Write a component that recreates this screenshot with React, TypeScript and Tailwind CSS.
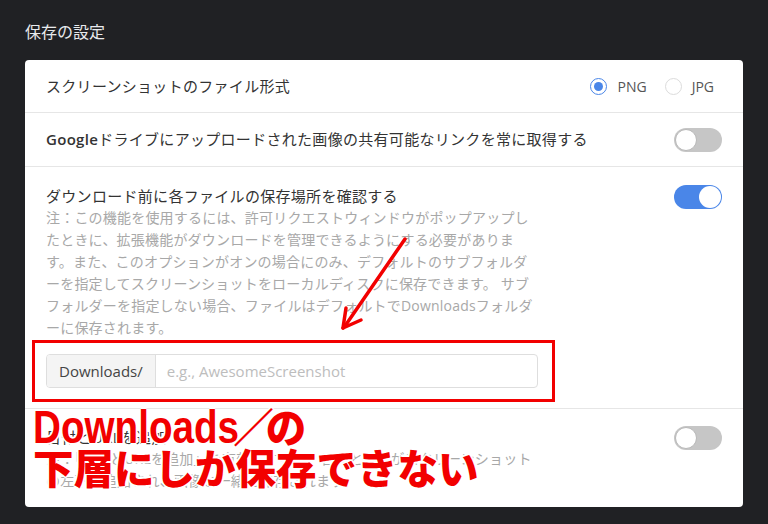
import type { ReactNode } from 'react'

const jp = "font-['Open_Sans','Noto_Sans_CJK_JP',sans-serif]"

function Toggle({ on }: { on?: boolean }) {
  return (
    <div
      className={`relative h-[24px] w-[48px] shrink-0 rounded-full ${on ? 'bg-[#4a86e8]' : 'bg-[#c6c6c6]'}`}
    >
      <div
        className={`absolute top-[1px] h-[22px] w-[22px] rounded-full bg-white ${
          on ? 'right-[1px]' : 'left-[1px] border border-[#b8b8b8]'
        }`}
      />
    </div>
  )
}

function Radio({ checked, label }: { checked?: boolean; label: string }) {
  return (
    <label className="flex items-center gap-[10px]">
      <span
        className={`flex h-[17px] w-[17px] items-center justify-center rounded-full border ${
          checked ? 'border-[#4a86e8]' : 'border-[#dcdcdc]'
        }`}
      >
        {checked && <span className="h-[9px] w-[9px] rounded-full bg-[#4a86e8]" />}
      </span>
      <span className="text-[14px] text-[#555]">{label}</span>
    </label>
  )
}

function Row({ children, last }: { children: ReactNode; last?: boolean }) {
  return <div className={`px-[21px] ${last ? '' : 'border-b border-[#e6e6e6]'}`}>{children}</div>
}

const askNotes = [
  '注：この機能を使用するには、許可リクエストウィンドウがポップアップし',
  'たときに、拡張機能がダウンロードを管理できるようにする必要がありま',
  'す。また、このオプションがオンの場合にのみ、デフォルトのサブフォルダ',
  'ーを指定してスクリーンショットをローカルディスクに保存できます。 サブ',
  'フォルダーを指定しない場合、ファイルはデフォルトでDownloadsフォルダ',
  'ーに保存されます。',
]

const stampNotes = [
  '注：「日付とURLを追加」を有効にすると、日付とURLがスクリーンショット',
  'の左下に追加され、画像と一緒に保存されます。',
]

export default function App() {
  return (
    <div className={`relative h-[524px] w-[768px] overflow-hidden bg-[#202124] px-[25px] pt-[21px] ${jp}`}>
      <h2 className="mb-[17px] text-[16px] leading-[22px] text-[#e8eaed]">保存の設定</h2>

      <div className="rounded-[4px] bg-white">
        <Row>
          <div className="flex h-[52px] items-center justify-between">
            <span className="text-[15px] tracking-[0.3px] text-[#333]">スクリーンショットのファイル形式</span>
            <div className="mr-[8px] flex items-center gap-[18px]">
              <Radio checked label="PNG" />
              <Radio label="JPG" />
            </div>
          </div>
        </Row>

        <Row>
          <div className="flex h-[53px] items-center justify-between">
            <span className="text-[15px] tracking-[0.3px] text-[#333]">
              <b className="font-semibold">Google</b>ドライブにアップロードされた画像の共有可能なリンクを常に取得する
            </span>
            <Toggle />
          </div>
        </Row>

        <Row>
          <div className="pb-[20px] pt-[18px]">
            <div className="flex items-start justify-between">
              <div>
                <div className="text-[15px] leading-[22px] tracking-[0.3px] text-[#333]">
                  ダウンロード前に各ファイルの保存場所を確認する
                </div>
                {askNotes.map((line) => (
                  <div
                    key={line}
                    className="whitespace-nowrap text-[14px] leading-[22px] tracking-[0.2px] text-[#a8a8a8]"
                  >
                    {line}
                  </div>
                ))}
              </div>
              <Toggle on />
            </div>
            <div className="mt-[15px] flex h-[34px] w-[492px] overflow-hidden rounded-[4px] border border-[#dedede]">
              <span className="flex items-center border-r border-[#dedede] bg-[#f4f4f4] px-[12px] text-[15px] text-[#444]">
                Downloads/
              </span>
              <input
                className="flex-1 px-[11px] text-[15px] text-[#444] outline-none placeholder:text-[#bdbdbd]"
                placeholder="e.g., AwesomeScreenshot"
              />
            </div>
          </div>
        </Row>

        <Row last>
          <div className="flex h-[98px] items-start justify-between pt-[17px]">
            <div>
              <div className="text-[15px] leading-[22px] tracking-[0.3px] text-[#333]">日付とURLを追加</div>
              {stampNotes.map((line) => (
                <div
                  key={line}
                  className="whitespace-nowrap text-[14px] leading-[22px] tracking-[0.2px] text-[#a8a8a8]"
                >
                  {line}
                </div>
              ))}
            </div>
            <Toggle />
          </div>
        </Row>
      </div>

      {/* red callout over the folder field */}
      <div className="absolute left-[32px] top-[340px] h-[62px] w-[523px] border-[3px] border-[#f20000]" />
      <svg className="absolute left-[330px] top-[230px]" width="90" height="110" viewBox="0 0 90 110">
        <g stroke="#f20000" strokeWidth="3.5" strokeLinecap="round" fill="none">
          <path d="M75 9 L15 96" />
          <path d="M13 98 L16 78" />
          <path d="M13 98 L31 90" />
        </g>
      </svg>
      <div className="absolute left-[33px] top-[406px] font-['Noto_Sans_CJK_JP',sans-serif] text-[40.5px] font-black leading-[40px] text-[#f20000] [text-shadow:-2px_0_#fff,2px_0_#fff,0_-2px_#fff,0_2px_#fff]">
        <div className="whitespace-nowrap">
          <span className="mr-[-39px] inline-block origin-left scale-x-[0.84] font-['Liberation_Sans',sans-serif] text-[46px] font-bold">
            Downloads
          </span>
          <span className="ml-[-6px] inline-block">／</span>
          <span className="ml-[-8px] inline-block">の</span>
        </div>
        <div className="whitespace-nowrap">下層にしか保存できない</div>
      </div>
    </div>
  )
}
